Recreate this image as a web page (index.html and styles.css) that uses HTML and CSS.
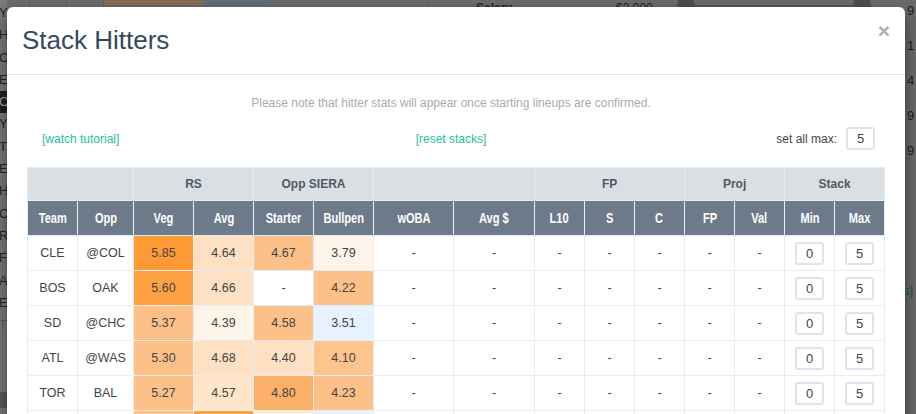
FILE: index.html
```html
<!DOCTYPE html>
<html>
<head>
<meta charset="utf-8">
<title>Stack Hitters</title>
<link rel="stylesheet" href="styles.css">
</head>
<body>
<div class="page">
  <ul class="left-list">
    <li>Y</li><li>H</li><li>O</li><li>E</li><li class="dark">O</li><li>Y</li><li>TI</li><li>EZ</li><li>H</li><li>O</li><li>R</li><li>F</li><li>AI</li><li>EZ</li><li class="faded">T</li>
    <li class="foot"></li>
  </ul>
  <div class="page-top">
    <span class="gl w23"></span><span class="gl w37"></span><span class="gl w27"></span>
    <span class="bar orange"></span><span class="bar blue"></span>
    <span class="gl w160"></span>
    <span class="pt-text">Salary</span>
    <span class="pt-text money">$2,000</span>
    <span class="knob"></span>
    <span class="track"></span>
    <span class="knob"></span>
  </div>
  <ul class="right-list">
    <li>9</li><li>1</li><li>4</li><li>9</li><li>9</li><li></li><li></li><li></li><li class="link">s]</li>
  </ul>
</div>

<div class="modal">
  <div class="modal-header">
    <h2 class="modal-title">Stack Hitters</h2>
    <span class="close">&times;</span>
  </div>
  <div class="modal-body">
    <p class="note">Please note that hitter stats will appear once starting lineups are confirmed.</p>
    <div class="links">
      <div class="links-left"><a class="lnk">[watch tutorial]</a></div>
      <div class="links-mid"><a class="lnk">[reset stacks]</a></div>
      <div class="links-right"><span class="lbl">set all max:</span><span class="box">5</span></div>
    </div>
    <table class="stack">
      <colgroup>
        <col class="c50"><col class="c56"><col class="c60"><col class="c60"><col class="c60"><col class="c60"><col class="c80"><col class="c81"><col class="c50"><col class="c50"><col class="c50"><col class="c50"><col class="c50"><col class="c50"><col class="c50">
      </colgroup>
      <thead>
        <tr class="h1">
          <th colspan="2"></th><th colspan="2">RS</th><th colspan="2">Opp SIERA</th><th colspan="2"></th><th colspan="3">FP</th><th colspan="2">Proj</th><th colspan="2">Stack</th>
        </tr>
        <tr class="h2">
          <th><span class="hc">Team</span></th><th><span class="hc">Opp</span></th><th><span class="hc">Veg</span></th><th><span class="hc">Avg</span></th><th><span class="hc">Starter</span></th><th><span class="hc">Bullpen</span></th><th><span class="hc">wOBA</span></th><th><span class="hc">Avg $</span></th><th><span class="hc">L10</span></th><th><span class="hc">S</span></th><th><span class="hc">C</span></th><th><span class="hc">FP</span></th><th><span class="hc">Val</span></th><th><span class="hc">Min</span></th><th><span class="hc">Max</span></th>
        </tr>
      </thead>
      <tbody>
        <tr>
          <td>CLE</td><td>@COL</td><td class="o1">5.85</td><td class="p2">4.64</td><td class="o3">4.67</td><td class="p4">3.79</td><td>-</td><td>-</td><td>-</td><td>-</td><td>-</td><td>-</td><td>-</td><td><span class="box">0</span></td><td><span class="box">5</span></td>
        </tr>
        <tr>
          <td>BOS</td><td>OAK</td><td class="o1b">5.60</td><td class="p2">4.66</td><td>-</td><td class="o3">4.22</td><td>-</td><td>-</td><td>-</td><td>-</td><td>-</td><td>-</td><td>-</td><td><span class="box">0</span></td><td><span class="box">5</span></td>
        </tr>
        <tr>
          <td>SD</td><td>@CHC</td><td class="o3">5.37</td><td class="p4">4.39</td><td class="o3">4.58</td><td class="b1">3.51</td><td>-</td><td>-</td><td>-</td><td>-</td><td>-</td><td>-</td><td>-</td><td><span class="box">0</span></td><td><span class="box">5</span></td>
        </tr>
        <tr>
          <td>ATL</td><td>@WAS</td><td class="o3">5.30</td><td class="p2">4.68</td><td class="p2">4.40</td><td class="o3b">4.10</td><td>-</td><td>-</td><td>-</td><td>-</td><td>-</td><td>-</td><td>-</td><td><span class="box">0</span></td><td><span class="box">5</span></td>
        </tr>
        <tr>
          <td>TOR</td><td>BAL</td><td class="o3">5.27</td><td class="p3">4.57</td><td class="o2">4.80</td><td class="o3">4.23</td><td>-</td><td>-</td><td>-</td><td>-</td><td>-</td><td>-</td><td>-</td><td><span class="box">0</span></td><td><span class="box">5</span></td>
        </tr>
        <tr>
          <td>MIL</td><td>@CIN</td><td class="o3">5.21</td><td class="o1b">4.95</td><td class="p5">4.31</td><td class="b1">3.62</td><td>-</td><td>-</td><td>-</td><td>-</td><td>-</td><td>-</td><td>-</td><td><span class="box">0</span></td><td><span class="box">5</span></td>
        </tr>
      </tbody>
    </table>
  </div>
</div>
</body>
</html>
```

FILE: styles.css
```css
html, body {
  margin: 0;
  padding: 0;
}
body {
  width: 916px;
  height: 414px;
  overflow: hidden;
  position: relative;
  background: #707070;
  font-family: "Liberation Sans", Arial, sans-serif;
}

/* ---------- dimmed page behind the modal ---------- */
.page {
  display: grid;
  grid-template-columns: 7px 1fr 11px;
  grid-template-rows: 7px 1fr;
  height: 414px;
}
.left-list {
  grid-column: 1;
  grid-row: 1 / 3;
  list-style: none;
  margin: 0;
  padding: 2px 0 0 0;
  background: #7a7a7a;
  overflow: hidden;
  font-size: 13px;
  color: #262626;
}
.left-list li {
  height: 22.3px;
  line-height: 22.3px;
  white-space: nowrap;
  margin-left: -1px;
}
.left-list li.dark {
  background: #1f2428;
  color: #a5a5a5;
}
.left-list li.faded {
  color: #5c5c5c;
}
.left-list li.foot {
  margin-top: 56px;
  height: 16px;
  background: #5c5c5c;
}
.page-top {
  grid-column: 2;
  grid-row: 1;
  display: flex;
  align-items: flex-start;
  height: 7px;
  overflow: hidden;
  background: #6e6e6e;
}
.gl {
  height: 7px;
  border-right: 1px solid #626262;
  flex: none;
}
.w23 { width: 22px; }
.w37 { width: 36px; }
.w27 { width: 36px; }
.w160 { width: 159px; }
.bar {
  flex: none;
  height: 7px;
}
.bar.orange {
  width: 100px;
  background: linear-gradient(#6e6e6e 0, #6e6e6e 1px, #9c7046 1px, #9c7046 3px, #6e6e6e 3px, #6e6e6e 4px, #9c7046 4px, #9c7046 5px, #6e6e6e 5px);
}
.bar.blue {
  width: 64px;
  background: linear-gradient(#6e6e6e 0, #6e6e6e 3px, #5b7189 3px);
}
.pt-text {
  flex: none;
  margin-left: 48px;
  font-size: 12px;
  line-height: 12px;
  margin-top: 2px;
  color: #262626;
  font-weight: bold;
}
.pt-text.money {
  margin-left: 104px;
  font-weight: normal;
}
.knob {
  flex: none;
  width: 18px;
  height: 18px;
  border-radius: 50%;
  background: #505050;
  margin-top: -4px;
  margin-left: 24px;
}
.track {
  flex: none;
  width: 158px;
  height: 2px;
  margin-top: 5px;
  background: #5a5a5a;
}
.track + .knob {
  margin-left: 0;
}
.right-list {
  grid-column: 3;
  grid-row: 1 / 3;
  list-style: none;
  margin: -7px 0 0 0;
  padding: 0 0 0 2px;
  background: #6a6a6a;
  font-size: 13px;
  color: #1d1d1d;
  overflow: hidden;
}
.right-list li {
  height: 35px;
  line-height: 35px;
  white-space: nowrap;
}
.right-list li.link {
  color: #1d5a4c;
  margin-left: -4px;
}

/* ---------- modal ---------- */
.modal {
  position: absolute;
  left: 7px;
  top: 7px;
  width: 898px;
  height: 440px;
  background: #fff;
  border-radius: 6px;
  box-shadow: 0 5px 15px rgba(0, 0, 0, 0.5);
}
.modal-header {
  display: flex;
  justify-content: space-between;
  align-items: flex-start;
  padding: 15px;
  border-bottom: 1px solid #e5e5e5;
}
.modal-title {
  margin: 0;
  font-size: 26px;
  line-height: 37px;
  font-weight: normal;
  color: #34495e;
}
.close {
  margin-top: -2px;
  font-size: 21px;
  font-weight: bold;
  line-height: 21px;
  color: #aeaeae;
}
.modal-body {
  padding: 20px 30px 0 20px;
}
.note {
  margin: 0;
  text-align: center;
  font-size: 12px;
  line-height: 17px;
  color: #ababab;
}
.links {
  display: grid;
  grid-template-columns: 1fr auto 1fr;
  align-items: center;
  height: 23px;
  margin-top: 15px;
  font-size: 12px;
}
.links-left .lnk {
  margin-left: 15px;
}
.links-right {
  display: flex;
  justify-content: flex-end;
  align-items: center;
}
.lnk {
  color: #1fbf9b;
}
.lbl {
  color: #444;
}
.box {
  display: inline-flex;
  align-items: center;
  justify-content: center;
  box-sizing: border-box;
  width: 29px;
  height: 23px;
  border: 2px solid #dde4eb;
  border-radius: 3px;
  font-size: 13px;
  color: #444;
  background: #fff;
}
.lbl + .box {
  margin-left: 9px;
}

/* ---------- table ---------- */
.stack {
  margin-top: 17px;
  width: 857px;
  table-layout: fixed;
  border-collapse: collapse;
  border: 1px solid #e6eaed;
}
.c50 { width: 50px; }
.c56 { width: 56px; }
.c60 { width: 60px; }
.c80 { width: 80px; }
.c81 { width: 81px; }
.stack th,
.stack td {
  padding: 0;
  text-align: center;
  border: 1px solid #e9edf0;
}
.h1 th {
  height: 32px;
  background: #d9dfe2;
  color: #4f5963;
  font-size: 12px;
  font-weight: bold;
}
.h2 th {
  height: 34px;
  background: #6c7a89;
  color: #fff;
  white-space: nowrap;
}
.hc {
  display: inline-block;
  font-size: 14px;
  font-weight: bold;
  transform: scaleX(0.79);
}
.stack td {
  height: 34px;
  font-size: 12.5px;
  color: #444;
}
.o1 { background: #fe9a36; }
.o1b { background: #fea143; }
.o2 { background: #fcb06a; }
.o3 { background: #fdc089; }
.o3b { background: #fdc48e; }
.p2 { background: #fee0c3; }
.p3 { background: #fee5cc; }
.p4 { background: #fff4e9; }
.p5 { background: #fef0e0; }
.b1 { background: #e6f2fd; }
```
